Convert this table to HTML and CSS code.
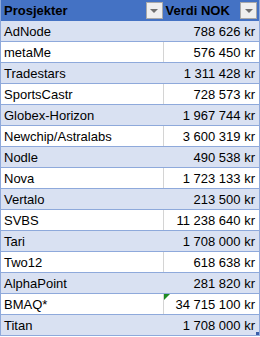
FILE: index.html
```html
<!DOCTYPE html>
<html lang="no">
<head>
<meta charset="utf-8">
<link rel="stylesheet" href="styles.css">
</head>
<body>
<table class="sheet">
  <colgroup><col class="c-name"><col class="c-val"></colgroup>
  <thead>
    <tr>
      <th class="h-name"><div class="hcell"><span>Prosjekter</span><span class="dd"><span class="tri"></span></span></div></th>
      <th class="h-val"><div class="hcell"><span>Verdi NOK</span><span class="dd"><span class="tri"></span></span></div></th>
    </tr>
  </thead>
  <tbody>
    <tr class="band"><td>AdNode</td><td class="num">788 626 kr</td></tr>
    <tr><td>metaMe</td><td class="num">576 450 kr</td></tr>
    <tr class="band"><td>Tradestars</td><td class="num">1 311 428 kr</td></tr>
    <tr><td>SportsCastr</td><td class="num">728 573 kr</td></tr>
    <tr class="band"><td>Globex-Horizon</td><td class="num">1 967 744 kr</td></tr>
    <tr><td>Newchip/Astralabs</td><td class="num">3 600 319 kr</td></tr>
    <tr class="band"><td>Nodle</td><td class="num">490 538 kr</td></tr>
    <tr><td>Nova</td><td class="num">1 723 133 kr</td></tr>
    <tr class="band"><td>Vertalo</td><td class="num">213 500 kr</td></tr>
    <tr><td>SVBS</td><td class="num">11 238 640 kr</td></tr>
    <tr class="band"><td>Tari</td><td class="num">1 708 000 kr</td></tr>
    <tr><td>Two12</td><td class="num">618 638 kr</td></tr>
    <tr class="band"><td>AlphaPoint</td><td class="num">281 820 kr</td></tr>
    <tr><td>BMAQ*</td><td class="num note">34 715 100 kr<span class="flag"></span></td></tr>
    <tr class="band"><td>Titan</td><td class="num last">1 708 000 kr<span class="handle"></span></td></tr>
  </tbody>
</table>
</body>
</html>
```
FILE: styles.css
```css
html, body {
  margin: 0;
  padding: 0;
  background: #ffffff;
}

.sheet {
  border-collapse: collapse;
  table-layout: fixed;
  width: 259px;
  font-family: "Liberation Sans", Arial, sans-serif;
  font-size: 13px;
  color: #000000;
  border-left: 1px solid #8EA9DB;
  border-right: 1px solid #8EA9DB;
}

.c-name { width: 163px; }
.c-val { width: 96px; }

.sheet th {
  background: #4472C4;
  height: 21px;
  padding: 0;
  font-weight: bold;
  text-align: left;
  vertical-align: middle;
}

.hcell {
  display: flex;
  align-items: center;
  justify-content: space-between;
  height: 21px;
}

.h-name .hcell { padding: 0 1px 0 3px; }
.h-val .hcell { padding: 0 2px 0 2px; }

.dd {
  box-sizing: border-box;
  width: 17px;
  height: 17px;
  background: #EFEFEF;
  border: 1px solid #A9A9A9;
  display: flex;
  align-items: center;
  justify-content: center;
}

.tri {
  width: 0;
  height: 0;
  border-left: 4px solid transparent;
  border-right: 4px solid transparent;
  border-top: 4px solid #707070;
  margin-top: 1px;
}

.sheet td {
  height: 20px;
  padding: 0 3px;
  border-bottom: 1px solid #8EA9DB;
  white-space: nowrap;
  vertical-align: middle;
  line-height: 15px;
}

.sheet tr:not(.band) td:first-child {
  border-right: 1px solid #D4D4D4;
}

.sheet tr.band td {
  background: #D9E1F2;
}

.sheet td.num {
  text-align: right;
  padding-right: 4px;
}

.note, .last {
  position: relative;
}

.flag {
  position: absolute;
  left: 0;
  top: 0;
  width: 0;
  height: 0;
  border-top: 6px solid #1E8B24;
  border-right: 6px solid transparent;
}

.handle {
  position: absolute;
  right: 0;
  bottom: 0;
  width: 3px;
  height: 3px;
  background: #3B5EA8;
}
```
